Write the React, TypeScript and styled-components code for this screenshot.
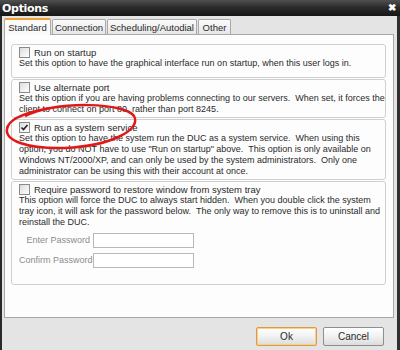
import React from 'react';
import styled, { createGlobalStyle } from 'styled-components';

const GlobalStyle = createGlobalStyle`
  html, body {
    margin: 0;
    padding: 0;
    width: 400px;
    height: 350px;
    overflow: hidden;
    background: #e3e3e3;
  }
`;

const Window = styled.div`
  position: relative;
  width: 400px;
  height: 350px;
  box-sizing: border-box;
  display: flex;
  flex-direction: column;
  background: #e4e4e4;
  border-left: 2px solid #2a2a2a;
  border-right: 3px solid #2f2f2f;
  font-family: 'Liberation Sans', Arial, sans-serif;
  color: #2a2a2a;
`;

const TitleBar = styled.div`
  flex: none;
  height: 16px;
  margin: 0 -3px 0 -2px;
  padding: 0 4px 0 2px;
  display: flex;
  align-items: center;
  justify-content: space-between;
  background: linear-gradient(#505050, #2c2c2c 45%, #161616);
`;

const Title = styled.span`
  color: #fff;
  font-weight: bold;
  font-size: 11px;
  font-family: 'DejaVu Sans', 'Liberation Sans', sans-serif;
  letter-spacing: -0.3px;
`;

const Close = styled.span`
  color: #fff;
  font-size: 10px;
  font-weight: bold;
  line-height: 1;
`;

const Body = styled.div`
  flex: 1;
  display: flex;
  flex-direction: column;
  padding: 1px 3px 0 2px;
`;

const TabStrip = styled.div`
  flex: none;
  display: flex;
  height: 17px;
  align-items: flex-end;
`;

const Tab = styled.div<{ $active?: boolean; $w: number }>`
  width: ${(p) => p.$w}px;
  box-sizing: border-box;
  height: ${(p) => (p.$active ? 17 : 15)}px;
  margin-right: 1px;
  font-size: 9.5px;
  display: flex;
  align-items: center;
  justify-content: center;
  border: 1px solid #a9a9a9;
  border-bottom: none;
  border-radius: 2px 2px 0 0;
  background: ${(p) => (p.$active ? '#fafafa' : 'linear-gradient(#fbfbfb, #e6e6e6)')};
  border-top: ${(p) => (p.$active ? '2px solid #f0a030' : '1px solid #a9a9a9')};
  position: relative;
  top: ${(p) => (p.$active ? 1 : 0)}px;
`;

const Panel = styled.div`
  flex: none;
  height: 284px;
  box-sizing: border-box;
  background: #fdfdfd;
  border: 1px solid #a9a9a9;
  padding: 9px 7px 0 6px;
  display: flex;
  flex-direction: column;
  gap: 1px;
`;

const Group = styled.div<{ $h: number }>`
  flex: none;
  height: ${(p) => p.$h}px;
  box-sizing: border-box;
  border: 1px solid #cfcfcf;
  border-radius: 3px;
  padding: 1px 6px 0 7px;
  font-size: 9px;
  line-height: 11px;
`;

const Head = styled.div`
  display: flex;
  align-items: center;
  gap: 4px;
  height: 12px;
  font-size: 9.5px;
`;

const Box = styled.span`
  width: 11px;
  height: 11px;
  box-sizing: border-box;
  border: 1px solid #8a8a8a;
  background: linear-gradient(135deg, #dcdcdc, #ffffff);
  display: inline-flex;
  align-items: center;
  justify-content: center;
`;

const Desc = styled.div`
  white-space: pre;
`;

const FieldRow = styled.div`
  display: flex;
  align-items: center;
  margin-top: 5px;
`;

const FieldLabel = styled.span`
  width: 71px;
  white-space: nowrap;
  text-align: right;
  color: #8c8c8c;
  padding-right: 3px;
`;

const Input = styled.div`
  width: 101px;
  height: 15px;
  box-sizing: border-box;
  border: 1px solid #b8b8b8;
  background: #fff;
`;

const Footer = styled.div`
  flex: none;
  height: 32px;
  display: flex;
  align-items: center;
  justify-content: flex-end;
  gap: 6px;
  padding: 2px 10px 0 0;
`;

const Button = styled.div<{ $default?: boolean }>`
  width: 61px;
  height: 19px;
  box-sizing: border-box;
  border: 1px solid ${(p) => (p.$default ? '#e39a3c' : '#8e8e8e')};
  border-radius: 2px;
  background: linear-gradient(#ffffff, #f1f1f1 50%, #dcdcdc);
  font-size: 10px;
  display: flex;
  align-items: center;
  justify-content: center;
  box-shadow: inset 0 0 0 1px ${(p) => (p.$default ? '#f7cf90' : 'transparent')};
`;

const Circle = styled.svg`
  position: absolute;
  left: -2px;
  top: 0;
  pointer-events: none;
`;

const Check = () => (
  <svg width="9" height="9" viewBox="0 0 9 9">
    <path d="M1.5 4.5 L3.5 6.5 L7.5 2" fill="none" stroke="#222" strokeWidth="1.6" />
  </svg>
);

const groups = [
  {
    title: 'Run on startup',
    h: 34,
    text: ['Set this option to have the graphical interface run on startup, when this user logs in.'],
  },
  {
    title: 'Use alternate port',
    h: 39,
    text: [
      'Set this option if you are having problems connecting to our servers.  When set, it forces the',
      'client to connect on port 80, rather than port 8245.',
    ],
  },
  {
    title: 'Run as a system service',
    checked: true,
    h: 61,
    text: [
      'Set this option to have the system run the DUC as a system service.  When using this',
      'option, you do NOT have to use "Run on startup" above.  This option is only available on',
      'Windows NT/2000/XP, and can only be used by the system administrators.  Only one',
      'administrator can be using this with their account at once.',
    ],
  },
];

export default function App() {
  return (
    <>
      <GlobalStyle />
      <Window>
        <TitleBar>
          <Title>Options</Title>
          <Close>✖</Close>
        </TitleBar>
        <Body>
          <TabStrip>
            <Tab $active $w={47}>Standard</Tab>
            <Tab $w={54}>Connection</Tab>
            <Tab $w={90}>Scheduling/Autodial</Tab>
            <Tab $w={33}>Other</Tab>
          </TabStrip>
          <Panel>
            {groups.map((g) => (
              <Group key={g.title} $h={g.h}>
                <Head>
                  <Box>{g.checked && <Check />}</Box>
                  {g.title}
                </Head>
                <Desc>{g.text.join('\n')}</Desc>
              </Group>
            ))}
            <Group $h={104}>
              <Head>
                <Box />
                Require password to restore window from system tray
              </Head>
              <Desc>
                {[
                  'This option will force the DUC to always start hidden.  When you double click the system',
                  'tray icon, it will ask for the password below.  The only way to remove this is to uninstall and',
                  'reinstall the DUC.',
                ].join('\n')}
              </Desc>
              <FieldRow>
                <FieldLabel>Enter Password</FieldLabel>
                <Input />
              </FieldRow>
              <FieldRow>
                <FieldLabel>Confirm Password</FieldLabel>
                <Input />
              </FieldRow>
            </Group>
          </Panel>
          <Footer>
            <Button $default>Ok</Button>
            <Button>Cancel</Button>
          </Footer>
        </Body>
        <Circle width="400" height="350">
          <path
            d="M25 116 C60 100 125 103 134 116 C142 130 110 146 65 148 C25 149 5 140 7 129 C8 121 20 114 45 109"
            fill="none"
            stroke="#e01818"
            strokeWidth="2.5"
          />
        </Circle>
      </Window>
    </>
  );
}
